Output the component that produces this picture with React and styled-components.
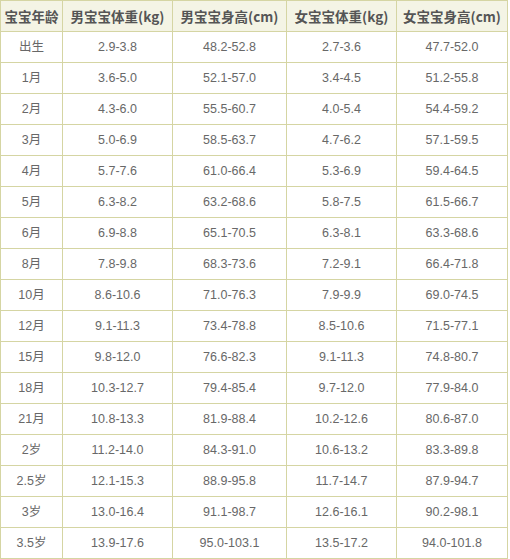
import React from 'react';
import styled, { createGlobalStyle } from 'styled-components';

const GlobalStyle = createGlobalStyle`
  html, body {
    margin: 0;
    padding: 0;
    background: #ffffff;
  }
`;

const Table = styled.table`
  border-collapse: collapse;
  table-layout: fixed;
  width: 508px;
  font-family: 'Liberation Sans', 'Noto Sans CJK SC', sans-serif;
  font-size: 12.5px;
  color: #686868;
`;

const HeadCell = styled.th`
  height: 30px;
  padding: 0;
  border: 1px solid #d5d5a3;
  background: #f4f4e5;
  color: #555555;
  font-family: 'Noto Sans CJK SC', 'Liberation Sans', sans-serif;
  font-size: 13.5px;
  font-weight: bold;
  text-align: center;
  vertical-align: middle;
`;

const Cell = styled.td`
  height: 30px;
  padding: 0;
  border: 1px solid #d5d5a3;
  text-align: center;
  vertical-align: middle;
  white-space: nowrap;
  line-height: 16px;
`;

const headers = ['宝宝年龄', '男宝宝体重(kg)', '男宝宝身高(cm)', '女宝宝体重(kg)', '女宝宝身高(cm)'];
const widths = [62, 110, 114, 110, 111];

const rows = [
  ['出生', '2.9-3.8', '48.2-52.8', '2.7-3.6', '47.7-52.0'],
  ['1月', '3.6-5.0', '52.1-57.0', '3.4-4.5', '51.2-55.8'],
  ['2月', '4.3-6.0', '55.5-60.7', '4.0-5.4', '54.4-59.2'],
  ['3月', '5.0-6.9', '58.5-63.7', '4.7-6.2', '57.1-59.5'],
  ['4月', '5.7-7.6', '61.0-66.4', '5.3-6.9', '59.4-64.5'],
  ['5月', '6.3-8.2', '63.2-68.6', '5.8-7.5', '61.5-66.7'],
  ['6月', '6.9-8.8', '65.1-70.5', '6.3-8.1', '63.3-68.6'],
  ['8月', '7.8-9.8', '68.3-73.6', '7.2-9.1', '66.4-71.8'],
  ['10月', '8.6-10.6', '71.0-76.3', '7.9-9.9', '69.0-74.5'],
  ['12月', '9.1-11.3', '73.4-78.8', '8.5-10.6', '71.5-77.1'],
  ['15月', '9.8-12.0', '76.6-82.3', '9.1-11.3', '74.8-80.7'],
  ['18月', '10.3-12.7', '79.4-85.4', '9.7-12.0', '77.9-84.0'],
  ['21月', '10.8-13.3', '81.9-88.4', '10.2-12.6', '80.6-87.0'],
  ['2岁', '11.2-14.0', '84.3-91.0', '10.6-13.2', '83.3-89.8'],
  ['2.5岁', '12.1-15.3', '88.9-95.8', '11.7-14.7', '87.9-94.7'],
  ['3岁', '13.0-16.4', '91.1-98.7', '12.6-16.1', '90.2-98.1'],
  ['3.5岁', '13.9-17.6', '95.0-103.1', '13.5-17.2', '94.0-101.8'],
];

export default function App() {
  return (
    <>
      <GlobalStyle />
      <Table>
        <colgroup>
          {widths.map((w, i) => (
            <col key={i} style={{ width: w }} />
          ))}
        </colgroup>
        <thead>
          <tr>
            {headers.map(h => (
              <HeadCell key={h}>{h}</HeadCell>
            ))}
          </tr>
        </thead>
        <tbody>
          {rows.map(r => (
            <tr key={r[0]}>
              {r.map((c, i) => (
                <Cell key={i}>{c}</Cell>
              ))}
            </tr>
          ))}
        </tbody>
      </Table>
    </>
  );
}
